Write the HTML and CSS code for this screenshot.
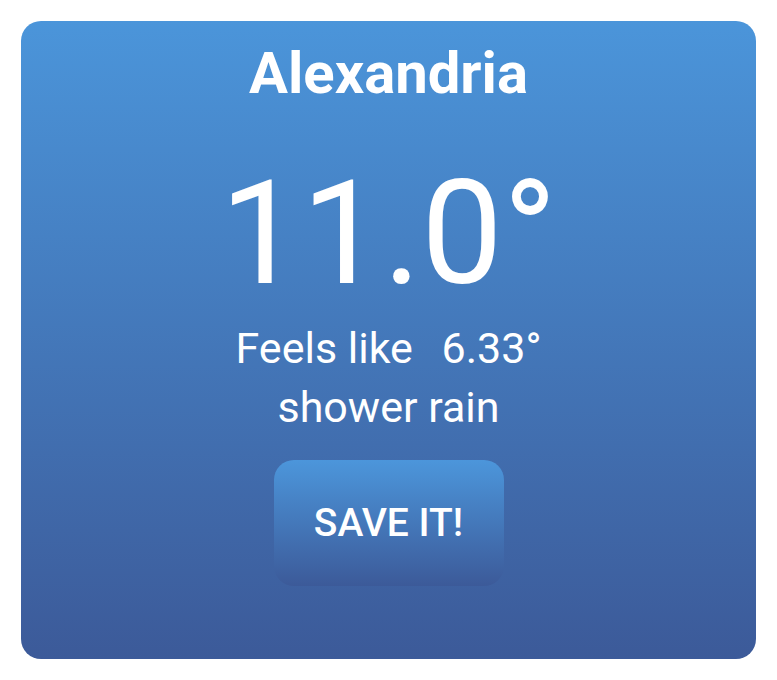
FILE: index.html
```html
<!DOCTYPE html>
<html lang="en">
<head>
<meta charset="utf-8">
<title>Weather</title>
<link rel="stylesheet" href="styles.css">
</head>
<body>
<div class="card">
  <h1 class="city">Alexandria</h1>
  <div class="temp">11.0°</div>
  <div class="feels">Feels like <span class="feels-value">6.33°</span></div>
  <div class="desc">shower rain</div>
  <button class="save">SAVE IT!</button>
</div>
</body>
</html>
```

FILE: styles.css
```css
html, body {
  margin: 0;
  padding: 0;
  background: #ffffff;
}
body {
  padding: 21px;
  font-family: Roboto, "Liberation Sans", sans-serif;
  color: #ffffff;
}
.card {
  width: 735px;
  height: 638px;
  box-sizing: border-box;
  border-radius: 20px;
  background: linear-gradient(to bottom, #4b95da 0%, #3c5a99 100%);
  padding-top: 20px;
  display: flex;
  flex-direction: column;
  align-items: center;
}
.city {
  margin: 0;
  font-size: 58px;
  line-height: 64px;
  font-weight: 700;
}
.temp {
  margin-top: 48px;
  font-size: 145px;
  line-height: 160px;
  font-weight: 400;
}
.feels, .desc {
  font-size: 43px;
  line-height: 59px;
}
.feels {
  margin-top: 6px;
}
.feels-value {
  margin-left: 18px;
}
.save {
  margin-top: 23px;
  width: 230px;
  height: 126px;
  border: none;
  border-radius: 20px;
  background: linear-gradient(to bottom, #4c96db 0%, #3c5a99 100%);
  color: #ffffff;
  font-family: Roboto, "Liberation Sans", sans-serif;
  font-size: 39px;
  font-weight: 500;
  padding: 0;
}
```
